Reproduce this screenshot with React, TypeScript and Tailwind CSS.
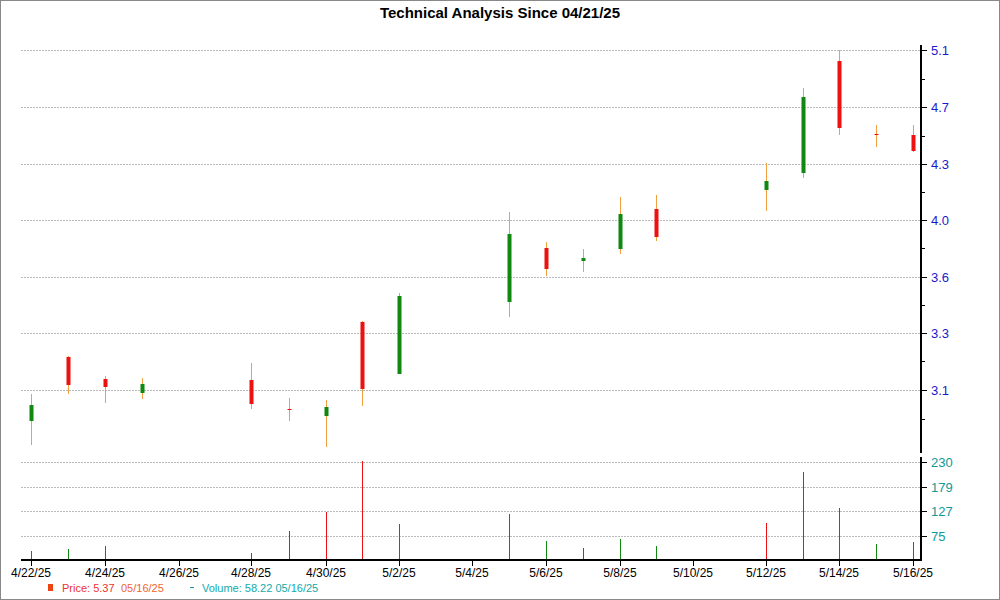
const G = '#118811'
const R = '#ee1111'
const W = '#f0a040'

type C = [number, number, number, number, number, string]
const candles: C[] = [
  [30, 393, 444, 404, 420, G],
  [67, 355, 393, 356, 384, R],
  [104, 375, 402, 378, 386, R],
  [141, 377, 398, 383, 392, G],
  [250, 362, 408, 379, 403, R],
  [288, 397, 420, 408, 409, R],
  [325, 399, 446, 406, 415, G],
  [361, 320, 405, 321, 388, R],
  [398, 292, 373, 295, 373, G],
  [508, 211, 316, 233, 301, G],
  [545, 241, 275, 247, 268, R],
  [582, 248, 271, 257, 260, G],
  [619, 196, 253, 213, 248, G],
  [655, 194, 240, 208, 236, R],
  [765, 162, 210, 180, 189, G],
  [802, 87, 177, 96, 172, G],
  [838, 49, 134, 60, 127, R],
  [875, 124, 146, 133, 134, R],
  [912, 124, 151, 134, 150, R],
]

const vols: [number, number, string][] = [
  [30, 550, G], [67, 548, G], [104, 545, G], [250, 552, R], [288, 530, R], [325, 511, R],
  [361, 460, R], [398, 523, G], [508, 513, G], [545, 540, G], [582, 547, R], [619, 538, G],
  [655, 545, G], [765, 522, R], [802, 471, R], [838, 507, G], [875, 543, G], [912, 541, G],
]

const priceGrid: [number, string][] = [[49, '5.1'], [106, '4.7'], [163, '4.3'], [219, '4.0'], [276, '3.6'], [332, '3.3'], [389, '3.1']]
const volGrid: [number, string][] = [[461, '230'], [486, '179'], [510, '127'], [535, '75']]
const dates: [number, string][] = [[30, '4/22/25'], [104, '4/24/25'], [178, '4/26/25'], [250, '4/28/25'], [325, '4/30/25'], [398, '5/2/25'], [471, '5/4/25'], [545, '5/6/25'], [619, '5/8/25'], [692, '5/10/25'], [765, '5/12/25'], [838, '5/14/25'], [912, '5/16/25']]

export default function App() {
  return (
    <div className="relative w-[1000px] h-[600px] bg-white border border-[#888] overflow-hidden" style={{ fontFamily: '"Liberation Sans", Arial, sans-serif' }}>
      <div className="absolute top-0 left-0 right-0 text-center text-[15px] font-bold text-black pt-[1px]">
        Technical Analysis Since 04/21/25
      </div>
      <svg width="1000" height="600" className="block">
        {priceGrid.map(([y, l]) => (
          <g key={l}>
            <line x1="20" x2="920" y1={y + 0.5} y2={y + 0.5} stroke="#bbb" strokeDasharray="2 1" />
            <line x1="920" x2="926" y1={y + 0.5} y2={y + 0.5} stroke="#000" />
            <text x="930" y={y + 5} fontSize="13" fill="#1a1acc">{l}</text>
          </g>
        ))}
        {[78, 135, 191, 247, 304, 360, 418].map((y) => <line key={y} x1="920" x2="924" y1={y + 0.5} y2={y + 0.5} stroke="#000" />)}
        {volGrid.map(([y, l]) => (
          <g key={l}>
            <line x1="20" x2="920" y1={y + 0.5} y2={y + 0.5} stroke="#bbb" strokeDasharray="2 1" />
            <line x1="920" x2="926" y1={y + 0.5} y2={y + 0.5} stroke="#000" />
            <text x="930" y={y + 5} fontSize="13" fill="#119999">{l}</text>
          </g>
        ))}
        <line x1="920" x2="920" y1="44" y2="452" stroke="#000" strokeWidth="2" />
        <line x1="920" x2="920" y1="456" y2="560" stroke="#000" strokeWidth="2" />
        {vols.map(([x, y, c]) => <line key={x} x1={x + 0.5} x2={x + 0.5} y1={y} y2="559" stroke={c} />)}
        <line x1="20" x2="921" y1="559" y2="559" stroke="#000" strokeWidth="2" />
        {dates.map(([x, l]) => (
          <g key={l}>
            <line x1={x + 0.5} x2={x + 0.5} y1="559" y2="565" stroke="#000" />
            <text x={x} y="576" fontSize="12" textAnchor="middle" fill="#000">{l}</text>
          </g>
        ))}
        {candles.map(([x, wt, wb, bt, bb, c]) => (
          <g key={x}>
            <line x1={x + 0.5} x2={x + 0.5} y1={wt} y2={wb} stroke={W} />
            <rect x={x - 1.5} y={bt} width="4" height={Math.max(1, bb - bt)} fill={c} />
          </g>
        ))}
        <rect x="47" y="583" width="5" height="7" fill="#ee4411" />
        <text x="61" y="591" fontSize="11" fill="#ee3333">Price: 5.37</text>
        <text x="120" y="591" fontSize="11" fill="#ee6633">05/16/25</text>
        <line x1="189" x2="193" y1="586.5" y2="586.5" stroke="#119999" />
        <text x="201" y="591" fontSize="11" fill="#11aaaa">Volume: 58.22  05/16/25</text>
      </svg>
    </div>
  )
}
